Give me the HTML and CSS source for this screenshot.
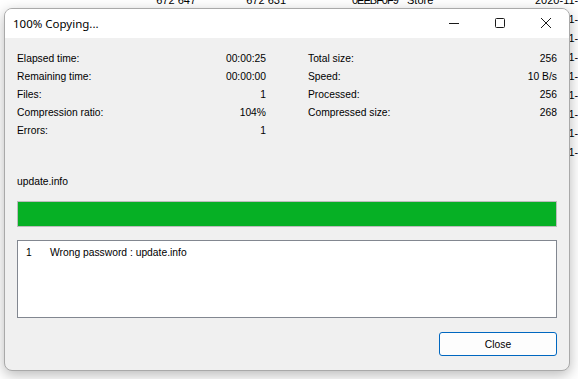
FILE: index.html
```html
<!DOCTYPE html>
<html>
<head>
  <meta charset="utf-8">
  <title>100% Copying...</title>
  <link rel="stylesheet" href="styles.css">
</head>
<body>
  <main class="desk">
    <div class="file-list">
      <div class="file-row"><span class="num">672 647</span><span class="num">672 631</span><span class="crc">0EEBF0F9</span><span>Store</span><span>2020-11-15 10:42</span></div>
      <div class="file-row"><span></span><span></span><span></span><span></span><span>2020-11-15 10:42</span></div>
      <div class="file-row"><span></span><span></span><span></span><span></span><span>2020-11-15 10:42</span></div>
      <div class="file-row"><span></span><span></span><span></span><span></span><span>2020-11-15 10:42</span></div>
      <div class="file-row"><span></span><span></span><span></span><span></span><span>2020-11-15 10:42</span></div>
      <div class="file-row"><span></span><span></span><span></span><span></span><span>2020-11-15 10:42</span></div>
      <div class="file-row"><span></span><span></span><span></span><span></span><span>2020-11-15 10:42</span></div>
      <div class="file-row"><span></span><span></span><span></span><span></span><span>2020-11-15 10:42</span></div>
      <div class="file-row"><span></span><span></span><span></span><span></span><span>2020-11-15 10:42</span></div>
    </div>

    <section class="dialog">
      <header class="titlebar">
        <span class="title">100% Copying...</span>
        <div class="controls">
          <span class="ctrl"><svg width="10" height="10" viewBox="0 0 10 10"><path d="M0 5.5h10" stroke="#1a1a1a" stroke-width="1"/></svg></span>
          <span class="ctrl"><svg width="10" height="10" viewBox="0 0 10 10"><rect x="0.5" y="0.5" width="9" height="9" rx="1" fill="none" stroke="#1a1a1a" stroke-width="1"/></svg></span>
          <span class="ctrl"><svg width="10" height="10" viewBox="0 0 10 10"><path d="M0 0L10 10M10 0L0 10" stroke="#1a1a1a" stroke-width="1"/></svg></span>
        </div>
      </header>

      <div class="body">
        <div class="stats">
          <div class="col">
            <span>Elapsed time:</span><span class="val">00:00:25</span>
            <span>Remaining time:</span><span class="val">00:00:00</span>
            <span>Files:</span><span class="val">1</span>
            <span>Compression ratio:</span><span class="val">104%</span>
            <span>Errors:</span><span class="val">1</span>
          </div>
          <div class="col">
            <span>Total size:</span><span class="val">256</span>
            <span>Speed:</span><span class="val">10 B/s</span>
            <span>Processed:</span><span class="val">256</span>
            <span>Compressed size:</span><span class="val">268</span>
          </div>
        </div>

        <div class="current">update.info</div>
        <div class="progress"><div class="fill" style="width: 100%"></div></div>

        <div class="log">
          <div class="log-row"><span class="idx">1</span><span>Wrong password : update.info</span></div>
        </div>

        <div class="buttons">
          <button class="btn">Close</button>
        </div>
      </div>
    </section>
  </main>
</body>
</html>
```

FILE: styles.css
```css
* {
  box-sizing: border-box;
}

html, body {
  margin: 0;
  background: #fff;
}

.desk {
  position: relative;
  width: 578px;
  height: 379px;
  overflow: hidden;
  font-family: 'Noto Sans', sans-serif;
  font-size: 12px;
  color: #000;
}

/* file manager list behind the window */
.file-list {
  margin-top: -9px;
  font-family: 'Liberation Sans', Arial, sans-serif;
  font-size: 11px;
}

.file-row {
  display: grid;
  grid-template-columns: 196px 90px 121px 128px 1fr;
  height: 19px;
  line-height: 19px;
  white-space: nowrap;
  overflow: hidden;
}

.file-row .num {
  text-align: right;
}

.file-row .crc {
  padding-left: 66px;
  letter-spacing: -1px;
}

/* copy dialog */
.dialog {
  position: absolute;
  left: 4px;
  top: 8px;
  width: 566px;
  height: 363px;
  display: flex;
  flex-direction: column;
  background: #f0f0f0;
  border: 1px solid #a9a9a9;
  border-radius: 8px;
  overflow: hidden;
  box-shadow: 0 4px 14px rgba(0, 0, 0, 0.28);
}

.titlebar {
  display: flex;
  align-items: center;
  height: 29px;
  background: #fff;
  padding-left: 8px;
}

.title {
  flex-grow: 1;
  font-family: 'Noto Sans', sans-serif;
  font-size: 11.5px;
  color: #000;
}

.controls {
  display: flex;
  height: 100%;
}

.ctrl {
  width: 46px;
  display: flex;
  align-items: center;
  justify-content: center;
  padding-bottom: 1px;
}

.body {
  flex-grow: 1;
  display: flex;
  flex-direction: column;
  padding: 12px 12px 0 12px;
  font-family: 'Liberation Sans', Arial, sans-serif;
  font-size: 10.3px;
}

.stats {
  display: grid;
  grid-template-columns: 249px 249px;
  gap: 42px;
  margin-right: -1px;
}

.col {
  display: grid;
  grid-template-columns: 1fr auto;
  grid-auto-rows: 18px;
  line-height: 18px;
  align-content: start;
}

.val {
  text-align: right;
}

.current {
  margin-top: 33px;
  line-height: 18px;
}

.progress {
  margin-top: 10px;
  height: 26px;
  border: 1px solid #bcbcbc;
  background: #e6e6e6;
}

.fill {
  height: 100%;
  background: #06b025;
}

.log {
  margin-top: 13px;
  height: 78px;
  background: #fff;
  border: 1px solid #828790;
  padding: 4px 0 0 8px;
}

.log-row {
  display: flex;
  line-height: 16px;
}

.idx {
  width: 24px;
}

.buttons {
  display: flex;
  justify-content: flex-end;
  margin-top: 14px;
}

.btn {
  width: 118px;
  height: 24px;
  margin: 0;
  padding: 0;
  font-family: 'Liberation Sans', Arial, sans-serif;
  font-size: 10.3px;
  color: #000;
  background: #fdfdfd;
  border: 1px solid #0067c0;
  border-radius: 3px;
}
```
